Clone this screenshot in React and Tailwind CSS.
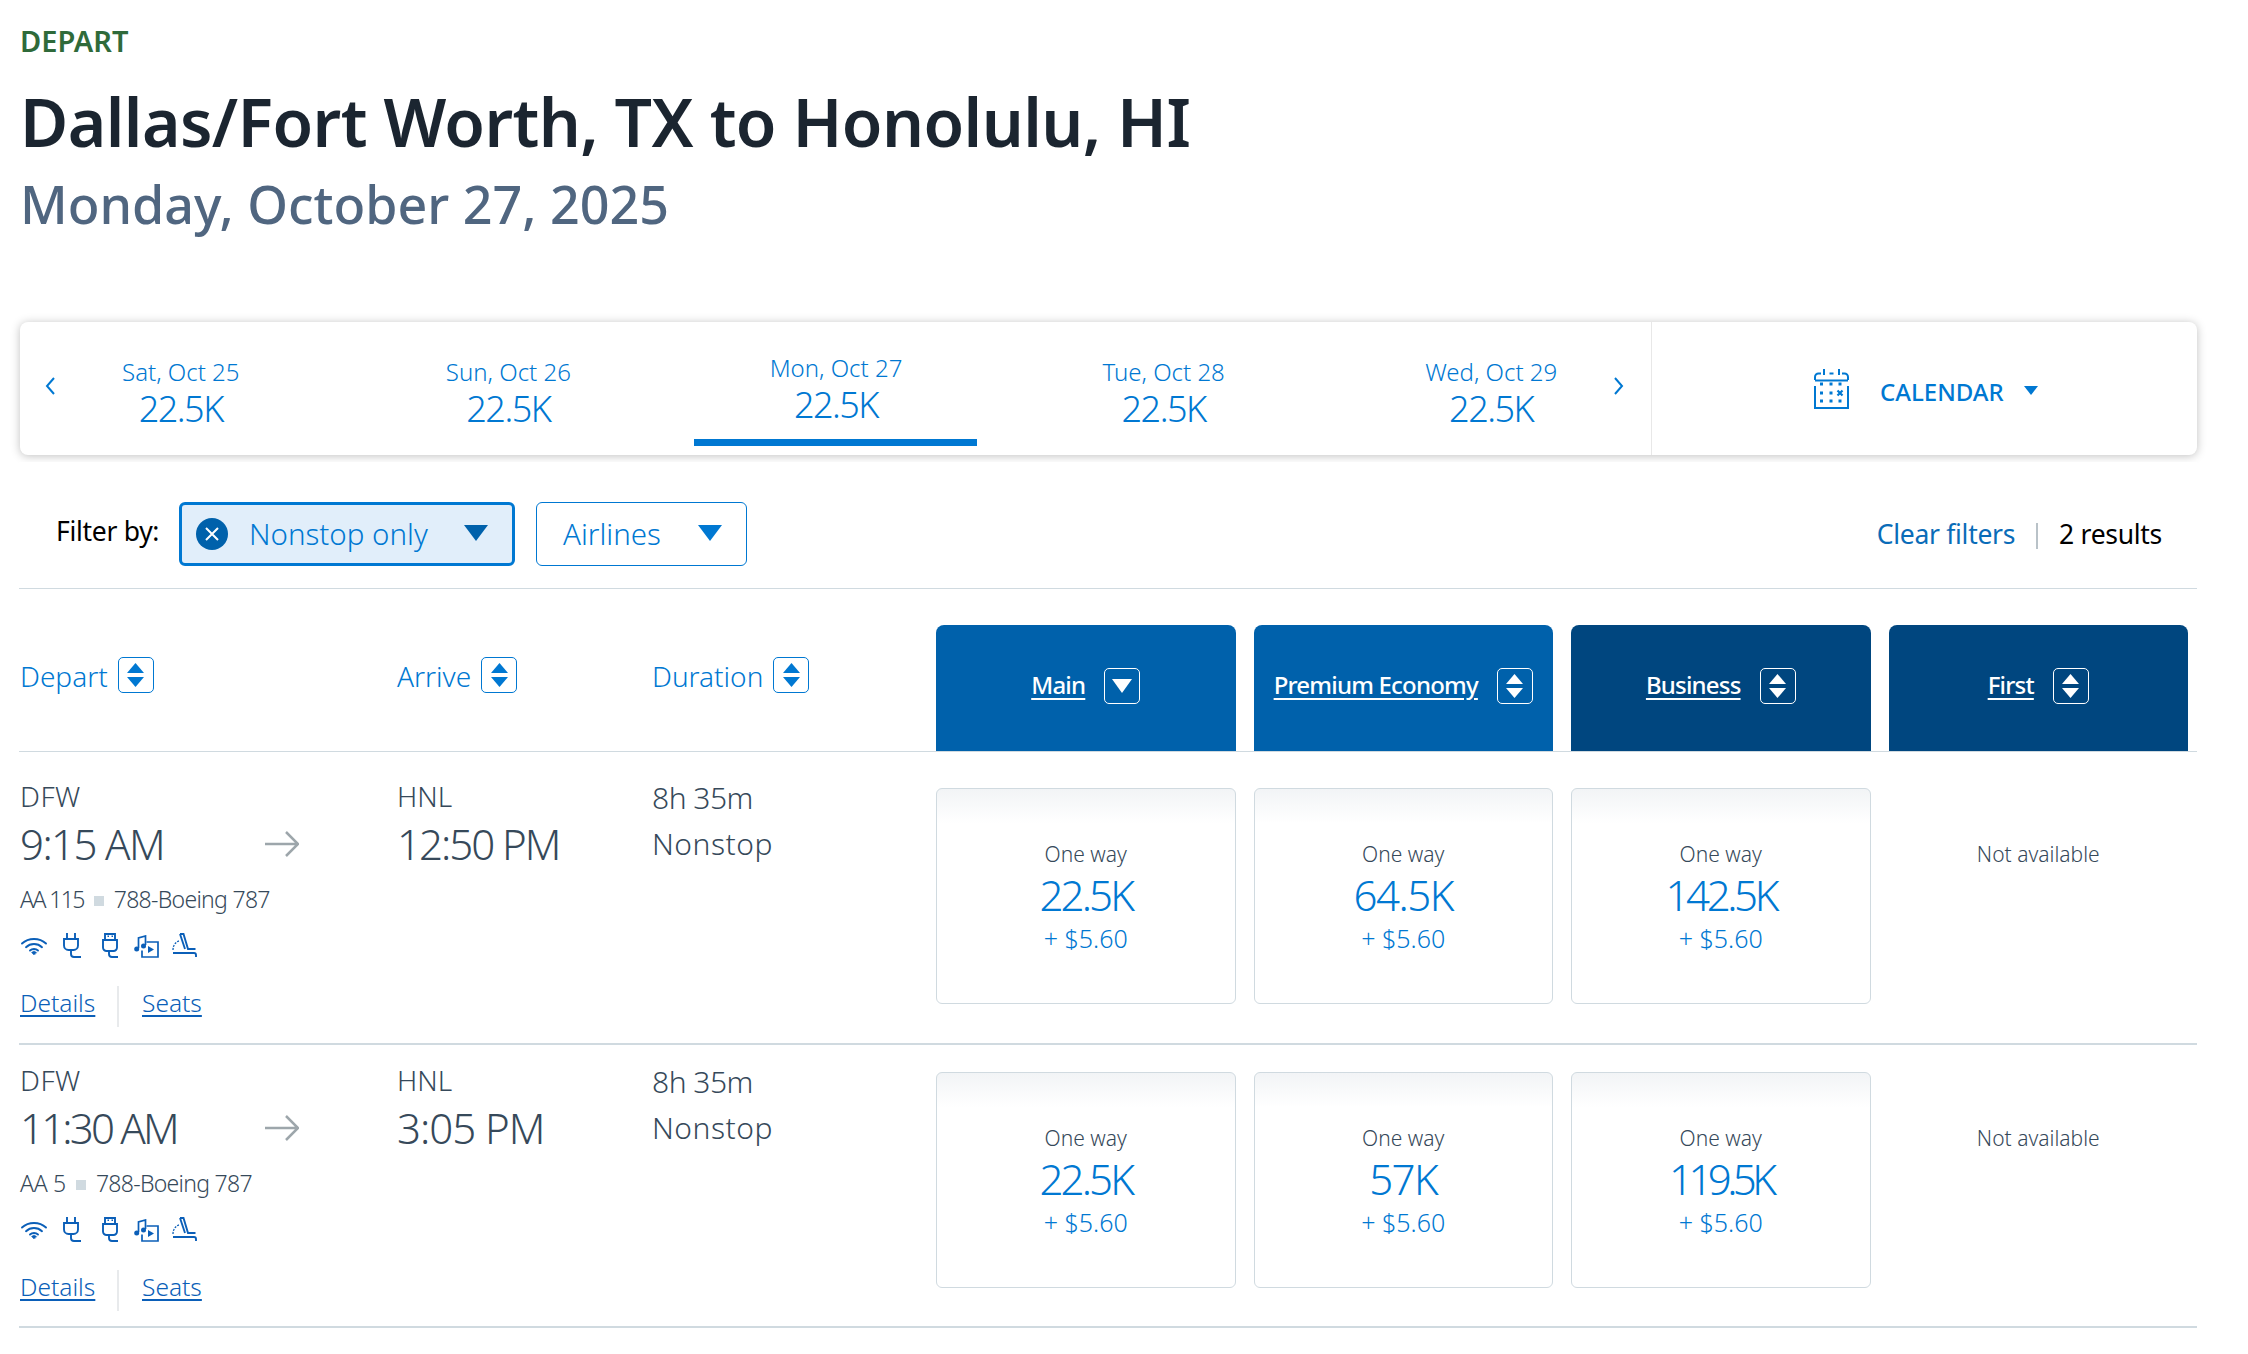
import React from "react";

const BLUE = "#0078d2";

function Tri({ dir = "down", w = 24, h = 16, color = BLUE, className = "" }) {
  return (
    <svg width={w} height={h} viewBox="0 0 24 16" preserveAspectRatio="none" className={"shrink-0 " + className}>
      <polygon points={dir === "down" ? "0,0 24,0 12,16" : "0,16 24,16 12,0"} fill={color} />
    </svg>
  );
}

function SortBox({ color = BLUE, single = false }) {
  const border = color === BLUE ? "border-[#0078d2]" : "border-white";
  return (
    <span className={"w-[36px] h-[36px] shrink-0 rounded-[5px] border flex flex-col items-center justify-center gap-[4px] " + border}>
      {single ? (
        <Tri dir="down" w={20} h={14} color={color} />
      ) : (
        <>
          <Tri dir="up" w={17} h={10} color={color} />
          <Tri dir="down" w={17} h={10} color={color} />
        </>
      )}
    </span>
  );
}

function Calendar() {
  const dots = [];
  for (const y of [15, 24, 32]) for (const x of [7.5, 17, 26]) if (!(x === 26 && y === 24)) dots.push([x, y]);
  return (
    <svg width="35" height="40" viewBox="0 0 35 40" className="shrink-0" fill="none" stroke="#0078d2" strokeWidth="2">
      <path d="M1 11V8a3.5 3.5 0 0 1 3.5-3.5H7M28 4.500h2.500A3.500 3.500 0 0 1 34 8v3M1 11.500h33" />
      <path d="M10 0v6M25 0v6M15.500 4.500h4" />
      <path d="M1 17v22h33V17" />
      {dots.map(([x, y]) => (
        <rect key={x + "-" + y} x={x - 1.5} y={y - 1.5} width="3" height="3" fill="#0078d2" stroke="none" />
      ))}
      <path d="M23.500 21.500l5 5M28.500 21.500l-5 5" strokeWidth="2.200" />
    </svg>
  );
}

function Wifi() {
  return (
    <svg width="26" height="18" viewBox="0 0 26 18" fill="none" stroke="#0b5fb8" strokeWidth="1.900" strokeLinecap="round" className="shrink-0 mt-[4px]">
      <path d="M1 6.500C7.500 .5 18.500 .5 25 6.500" />
      <path d="M5 10.200C9.500 6 16.500 6 21 10.200" />
      <path d="M9 13.500C11.200 11.500 14.800 11.500 17 13.500" />
      <path d="M13 18l-2.500-2.600 2.500-1.400 2.500 1.400z" fill="#0b5fb8" strokeWidth="0.500" />
    </svg>
  );
}

function Plug() {
  return (
    <svg width="18" height="25" viewBox="0 0 18 25" fill="none" stroke="#0b5fb8" strokeWidth="1.900" className="shrink-0">
      <path d="M4 0v6M12 0v6" />
      <path d="M1 6h14v6.500a4.500 4.500 0 0 1-4.500 4.500h-5A4.500 4.500 0 0 1 1 12.500z" />
      <path d="M8 17v4a3 3 0 0 0 3 3h7" />
    </svg>
  );
}

function Usb() {
  return (
    <svg width="17" height="25" viewBox="0 0 17 25" fill="none" stroke="#0b5fb8" strokeWidth="1.900" className="shrink-0">
      <path d="M3 7V1h10v6" />
      <path d="M5.500 3.200h1.500M9.500 3.200h1.500" strokeWidth="1.600" />
      <path d="M1 7h14v7.500a3.500 3.500 0 0 1-3.500 3.500h-7A3.500 3.500 0 0 1 1 14.500z" />
      <path d="M7 18v3a3 3 0 0 0 3 3h6" />
    </svg>
  );
}

function Media() {
  return (
    <svg width="25" height="23" viewBox="0 0 25 23" fill="none" stroke="#0b5fb8" strokeWidth="1.700" className="shrink-0 mt-[2px]">
      <path d="M4.500 13V3L11.500 1v9" />
      <circle cx="2.700" cy="14" r="2.500" fill="#0b5fb8" stroke="none" />
      <circle cx="9.500" cy="11" r="2.500" fill="#0b5fb8" stroke="none" />
      <path d="M8 15.500V22h16V7H12.500" />
      <polygon points="14,11 14,18 20,14.500" fill="#0b5fb8" stroke="none" />
    </svg>
  );
}

function Seat() {
  return (
    <svg width="25" height="25" viewBox="0 0 25 25" fill="none" stroke="#0b5fb8" strokeWidth="1.900" className="shrink-0">
      <path d="M8 1h3.500l4.500 15h7.500" />
      <path d="M8 1l5 15" />
      <path d="M1 20h21a2 2 0 0 1 2 2v2" />
      <path d="M1 17C1 12 4 8.500 8 7.500" strokeDasharray="2 1.200" strokeWidth="1.300" />
    </svg>
  );
}

function DateCell({ date, selected }) {
  return (
    <div className={"flex flex-col items-center " + (selected ? "pt-[31px]" : "pt-[35px]")}>
      <div className="text-[24px] leading-[30px] font-light text-[#0078d2] whitespace-nowrap">{date}</div>
      <div className="text-[36px] leading-[44px] font-light text-[#0078d2] tracking-[-1.500px]">22.5K</div>
      {selected && <div className="mt-[12px] w-[283px] h-[7px] bg-[#0078d2]" />}
    </div>
  );
}

function HeaderSort({ label, className }) {
  return (
    <div className={"pt-[68px] flex items-start gap-[10px] " + className}>
      <span className="text-[28px] leading-[36px] mt-[1px] font-light text-[#0078d2]">{label}</span>
      <SortBox />
    </div>
  );
}

function Cabin({ label, bg, single }) {
  return (
    <div className={"w-[299.500px] h-[126px] rounded-t-[8px] flex justify-center items-start gap-[19px] pt-[43px] " + bg}>
      <a className="text-[24px] leading-[36px] -mt-[1px] font-medium text-white underline underline-offset-[4px] tracking-[-0.800px]">{label}</a>
      <SortBox color="#ffffff" single={single} />
    </div>
  );
}

function Fare({ price, tracking }) {
  return (
    <div className="w-[299.500px] h-[216px] rounded-[6px] border border-[#d0dae0] bg-gradient-to-b from-[#f2f4f6] to-white to-[16%] flex flex-col items-center pt-[50px]">
      <div className="text-[21px] leading-[30px] font-light text-[#36495a]">One way</div>
      <div className={"text-[42px] leading-[50px] mt-[1px] font-light text-[#0078d2] " + tracking}>{price}</div>
      <div className="text-[25px] leading-[32px] mt-[2px] font-light text-[#0078d2]">+ $5.60</div>
    </div>
  );
}

function Row({ time, timeT, arrive, arriveT, flight, flightT, fares, height }) {
  return (
    <div className={"flex border-b-2 border-[#d0dae0] " + height}>
      <div className="w-[378px] pl-[1px] pt-[17px] shrink-0">
        <div className="text-[28px] leading-[36px] font-light text-[#36495a] tracking-[0.500px]">DFW</div>
        <div className="flex items-center mt-[5px]">
          <div className={"w-[245px] text-[42px] leading-[50px] font-light text-[#36495a] " + timeT}>{time}</div>
          <svg width="34" height="26" viewBox="0 0 34 26" fill="none" stroke="#9da6ab" strokeWidth="2.500">
            <path d="M0 13h32M21 1l12 12-12 12" />
          </svg>
        </div>
        <div className="flex items-center mt-[15px] text-[23px] leading-[30px] font-light text-[#36495a]">
          <span className={flightT}>{flight}</span>
          <span className="w-[10px] h-[10px] bg-[#d0dae0] mx-[10px] mt-[3px]" />
          <span className="tracking-[-0.700px]">788-Boeing 787</span>
        </div>
        <div className="flex items-start mt-[19px] h-[25px]">
          <span className="ml-[1px]"><Wifi /></span>
          <span className="ml-[16px]"><Plug /></span>
          <span className="ml-[21px]"><Usb /></span>
          <span className="ml-[15px]"><Media /></span>
          <span className="ml-[13px]"><Seat /></span>
        </div>
        <div className="flex items-start mt-[28px]">
          <a className="text-[24.500px] leading-[34px] font-light text-[#0b5fb8] underline underline-offset-[3px] w-[97px]">Details</a>
          <span className="w-[2px] h-[41px] bg-[#e8eaec]" />
          <a className="text-[24.500px] leading-[34px] ml-[23px] font-light text-[#0b5fb8] underline underline-offset-[3px]">Seats</a>
        </div>
      </div>
      <div className="w-[255px] pt-[17px] shrink-0">
        <div className="text-[28px] leading-[36px] font-light text-[#36495a]">HNL</div>
        <div className={"text-[42px] leading-[50px] mt-[5px] font-light text-[#36495a] whitespace-nowrap " + arriveT}>{arrive}</div>
      </div>
      <div className="w-[283px] pt-[14px] shrink-0 text-[30px] leading-[46px] font-light text-[#36495a]">
        <div className="tracking-[-0.500px]">8h 35m</div>
        <div className="tracking-[0.500px]">Nonstop</div>
      </div>
      <div className="flex gap-[18px] pt-[27px] ml-[1px]">
        {fares.map((f) => (
          <Fare key={f.p} price={f.p} tracking={f.t} />
        ))}
        <div className="w-[299.500px] pt-[51px] text-center text-[21px] leading-[30px] font-light text-[#36495a]">Not available</div>
      </div>
    </div>
  );
}

export default function App() {
  return (
    <div className="min-h-screen bg-white pl-[19px] pr-[51px] pt-[21px] font-['Noto_Sans',sans-serif]">
      <div className="pl-[1px]">
        <div className="text-[29px] leading-[40px] font-semibold text-[#2f6a3a]">DEPART</div>
        <h1 className="text-[66px] leading-[80px] mt-[20px] font-semibold text-[#1b2530] tracking-[-0.600px]">Dallas/Fort Worth, TX to Honolulu, HI</h1>
        <h2 className="text-[52px] leading-[60px] mt-[13px] font-medium text-[#506680]">Monday, October 27, 2025</h2>
      </div>

      <div className="ml-[1px] mt-[88px] h-[133px] rounded-[8px] bg-white shadow-[0_1px_10px_rgba(0,0,0,0.25)] flex">
        <div className="relative w-[1631px] shrink-0">
          <div className="grid grid-cols-5 w-[1638px] -ml-[3px]">
            <DateCell date="Sat, Oct 25" />
            <DateCell date="Sun, Oct 26" />
            <DateCell date="Mon, Oct 27" selected />
            <DateCell date="Tue, Oct 28" />
            <DateCell date="Wed, Oct 29" />
          </div>
          <svg width="10" height="18" viewBox="0 0 10 18" fill="none" stroke="#0078d2" strokeWidth="2" className="absolute left-[25px] top-[55px]">
            <path d="M9 1L2 9l7 8" />
          </svg>
          <svg width="10" height="18" viewBox="0 0 10 18" fill="none" stroke="#0078d2" strokeWidth="2" className="absolute left-[1594px] top-[55px]">
            <path d="M1 1l7 8-7 8" />
          </svg>
        </div>
        <div className="flex-1 border-l border-[#e8e8e8] flex items-center pl-[162px]">
          <Calendar />
          <span className="ml-[31px] mt-[7px] text-[24px] leading-[30px] font-medium text-[#0078d2]">CALENDAR</span>
          <Tri w={14} h={9} className="ml-[20px] mt-[4px]" />
        </div>
      </div>

      <div className="relative bg-white mt-[7px] h-[127px] border-b border-[#d0dae0] flex justify-between items-start pt-[40px]">
        <div className="flex items-start pl-[37px]">
          <span className="mt-[11px] w-[104px] text-[26.500px] leading-[36px] text-black whitespace-nowrap tracking-[-0.300px]">Filter by:</span>
          <button className="ml-[19px] w-[336px] h-[64px] rounded-[6px] border-[3px] border-[#0078d2] bg-[#e1eefa] flex items-center pl-[14px]">
            <span className="w-[32px] h-[32px] rounded-full bg-[#0061ab] flex items-center justify-center shrink-0">
              <svg width="14" height="14" viewBox="0 0 14 14" stroke="#fff" strokeWidth="2"><path d="M1 1l12 12M13 1L1 13" /></svg>
            </span>
            <span className="ml-[21px] text-[29.500px] leading-[40px] font-light text-[#0078d2] whitespace-nowrap">Nonstop only</span>
            <Tri color="#0061ab" className="ml-[36px] -mt-[3px]" />
          </button>
          <button className="ml-[21px] w-[211px] h-[64px] rounded-[6px] border border-[#0078d2] flex items-center pl-[26px]">
            <span className="text-[29.500px] leading-[40px] font-light text-[#0078d2]">Airlines</span>
            <Tri className="ml-[37px] -mt-[3px]" />
          </button>
        </div>
        <div className="flex items-start pr-[35px] mt-[14px] text-[26.500px] leading-[36px]">
          <a className="text-[#0a6cb8] tracking-[-0.300px]">Clear filters</a>
          <span className="w-[2px] h-[26px] bg-[#b9c2c8] ml-[21px] mr-[21px] mt-[7px]" />
          <span className="text-black tracking-[-0.300px]">2 results</span>
        </div>
      </div>

      <div className="flex h-[163px] border-b border-[#d0dae0] mb-[9px]">
        <HeaderSort label="Depart" className="w-[378px] pl-[1px] shrink-0" />
        <HeaderSort label="Arrive" className="w-[255px] shrink-0" />
        <HeaderSort label="Duration" className="w-[283px] shrink-0" />
        <div className="flex gap-[18px] items-end ml-[1px]">
          <Cabin label="Main" bg="bg-[#0061ab]" single />
          <Cabin label="Premium Economy" bg="bg-[#0061ab]" />
          <Cabin label="Business" bg="bg-[#00467f]" />
          <Cabin label="First" bg="bg-[#00467f]" />
        </div>
      </div>

      <Row
        height="h-[284px]"
        time="9:15 AM"
        timeT="tracking-[-1.600px]"
        arrive="12:50 PM"
        arriveT="tracking-[-2px]"
        flight="AA 115"
        flightT="tracking-[-1.600px]"
        fares={[
          { p: "22.5K", t: "tracking-[-2.900px]" },
          { p: "64.5K", t: "tracking-[-1.500px]" },
          { p: "142.5K", t: "tracking-[-3.400px]" },
        ]}
      />
      <Row
        height="h-[283px]"
        time="11:30 AM"
        timeT="tracking-[-2.800px]"
        arrive="3:05 PM"
        arriveT="tracking-[-1px]"
        flight="AA 5"
        flightT="tracking-[-0.300px]"
        fares={[
          { p: "22.5K", t: "tracking-[-2.900px]" },
          { p: "57K", t: "tracking-[-1.500px]" },
          { p: "119.5K", t: "tracking-[-4.600px]" },
        ]}
      />
    </div>
  );
}
